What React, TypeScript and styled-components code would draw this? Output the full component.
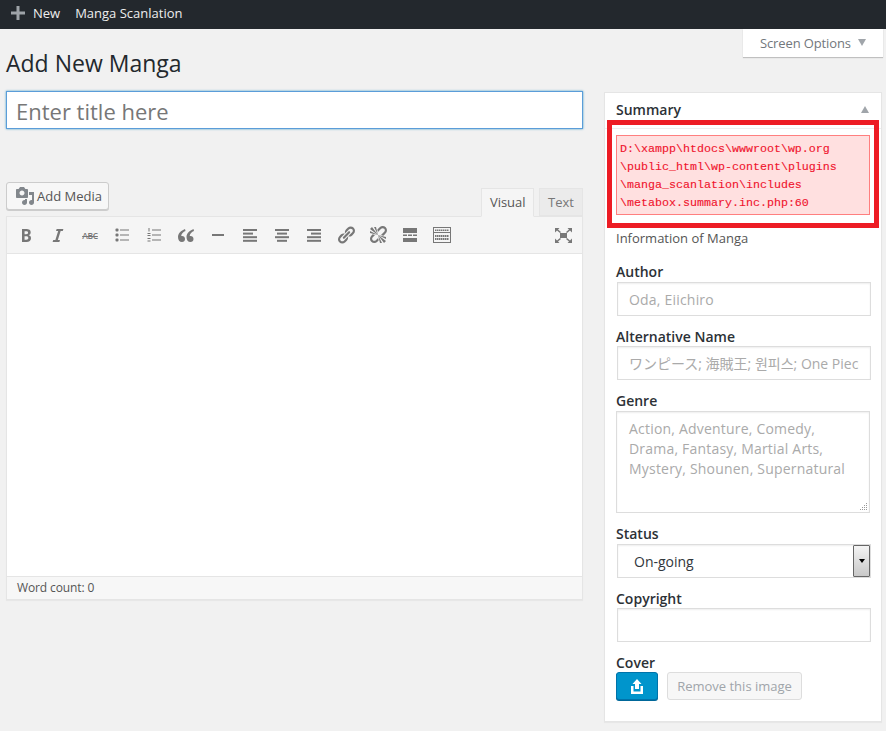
import React from 'react';
import styled, { createGlobalStyle } from 'styled-components';

const GlobalStyle = createGlobalStyle`
  html, body {
    margin: 0;
    padding: 0;
    background: #f1f1f1;
  }
  * {
    box-sizing: border-box;
  }
`;

const fontStack = `"Open Sans", "Noto Sans CJK JP", sans-serif`;

const Page = styled.div`
  width: 886px;
  height: 731px;
  overflow: hidden;
  background: #f1f1f1;
  font-family: ${fontStack};
  font-size: 14px;
  color: #23282d;
`;

const AdminBar = styled.div`
  height: 29px;
  background: #23282d;
  display: flex;
  align-items: center;
  padding: 0 0 3px 11px;
  color: #eee;
  font-size: 13px;
`;

const BarItem = styled.span`
  display: inline-flex;
  align-items: center;
  margin-right: 15px;
`;

const PlusIcon = styled.svg`
  width: 14px;
  height: 14px;
  margin-right: 8px;
  fill: #9ea3a8;
`;

const Header = styled.div`
  height: 62px;
  display: flex;
  justify-content: space-between;
  align-items: flex-start;
  padding: 0 3px 0 6px;
`;

const PageTitle = styled.h1`
  margin: 18px 0 0;
  font-size: 23px;
  line-height: 32px;
  font-weight: 400;
  color: #23282d;
`;

const ScreenOptions = styled.div`
  width: 140px;
  height: 28px;
  background: #fff;
  box-shadow: 0 1px 1px rgba(0, 0, 0, 0.2);
  display: flex;
  align-items: center;
  padding-left: 17px;
  font-size: 13px;
  letter-spacing: -0.12px;
  color: #72777c;
`;

const DownArrow = styled.span`
  width: 0;
  height: 0;
  margin-left: 7px;
  margin-top: -2px;
  border-left: 4px solid transparent;
  border-right: 4px solid transparent;
  border-top: 7px solid #a0a5aa;
`;

const Columns = styled.div`
  display: grid;
  grid-template-columns: 577px 278px;
  column-gap: 21px;
  padding-left: 6px;
  align-items: start;
`;

const MainColumn = styled.div`
  display: flex;
  flex-direction: column;
`;

const TitleInput = styled.input`
  height: 38px;
  width: 100%;
  border: 1px solid #5b9dd9;
  border-radius: 0;
  box-shadow: 0 0 2px rgba(30, 140, 190, 0.8);
  background: #fff;
  padding: 1px 9px 0;
  font-family: ${fontStack};
  font-size: 22px;
  outline: none;
  &::placeholder {
    color: #777;
    opacity: 1;
  }
`;

const EditorTools = styled.div`
  margin-top: 53px;
  height: 34px;
  display: flex;
  justify-content: space-between;
  align-items: flex-end;
`;

const AddMediaButton = styled.button`
  align-self: flex-start;
  height: 28px;
  width: 103px;
  display: flex;
  align-items: center;
  gap: 2px;
  padding: 0 0 0 8px;
  background: #f7f7f7;
  border: 1px solid #ccc;
  border-radius: 3px;
  box-shadow: 0 1px 0 #ccc;
  color: #555;
  font-family: ${fontStack};
  font-size: 13px;
`;

const MediaIcon = styled.svg`
  width: 20px;
  height: 20px;
  fill: #82878c;
  flex-shrink: 0;
`;

const Tabs = styled.div`
  display: flex;
  gap: 5px;
  align-items: flex-end;
`;

const Tab = styled.div<{ $active?: boolean }>`
  height: ${(p) => (p.$active ? 29 : 28)}px;
  margin-bottom: ${(p) => (p.$active ? -1 : 0)}px;
  padding: 0 ${(p) => (p.$active ? 7.5 : 8)}px ${(p) => (p.$active ? 2 : 0)}px;
  display: flex;
  align-items: center;
  font-size: 13px;
  border: 1px solid #e5e5e5;
  border-bottom: ${(p) => (p.$active ? '1px solid #f5f5f5' : '1px solid #e5e5e5')};
  background: ${(p) => (p.$active ? '#f5f5f5' : '#ebebeb')};
  color: ${(p) => (p.$active ? '#555' : '#777')};
  position: relative;
  z-index: 1;
`;

const EditorBox = styled.div`
  border: 1px solid #e5e5e5;
  box-shadow: 0 1px 1px rgba(0, 0, 0, 0.04);
  background: #fff;
`;

const Toolbar = styled.div`
  height: 37px;
  background: #f5f5f5;
  border-bottom: 1px solid #e5e5e5;
  display: flex;
  align-items: center;
  padding: 0 3px;
`;

const ToolButton = styled.span<{ $push?: boolean }>`
  width: 32px;
  height: 36px;
  display: flex;
  align-items: center;
  justify-content: center;
  margin-left: ${(p) => (p.$push ? 'auto' : 0)};
  svg {
    fill: #777;
  }
`;

const StrikeText = styled.span`
  font-size: 8.5px;
  font-weight: 600;
  letter-spacing: -0.3px;
  text-decoration: line-through;
  color: #777;
`;

const EditArea = styled.div`
  height: 322px;
  background: #fff;
`;

const StatusBar = styled.div`
  height: 23px;
  background: #f7f7f7;
  border-top: 1px solid #e5e5e5;
  padding: 0 0 2px 10px;
  display: flex;
  align-items: center;
  font-size: 12px;
  letter-spacing: -0.12px;
  color: #555;
`;

const SideBox = styled.div`
  position: relative;
  height: 630px;
  margin-top: 1px;
  background: #fff;
  border: 1px solid #e5e5e5;
  box-shadow: 0 1px 1px rgba(0, 0, 0, 0.04);
`;

const BoxHead = styled.div`
  height: 36px;
  border-bottom: 1px solid #eee;
  display: flex;
  justify-content: space-between;
  align-items: center;
  padding: 0 12px 2px 11px;
  font-weight: 600;
  font-size: 14px;
  color: #2c3136;
`;

const UpArrow = styled.span`
  width: 0;
  height: 0;
  border-left: 4px solid transparent;
  border-right: 4px solid transparent;
  border-bottom: 7px solid #a0a5aa;
`;

const BoxBody = styled.div`
  padding: 6px 11px 0;
`;

const ErrorBox = styled.div`
  width: 254px;
  height: 80px;
  padding: 4px 3px;
  border: 1px solid #ff7f7f;
  background: #ffe0e0;
  color: #f0142d;
  font-family: "Liberation Mono", monospace;
  font-size: 11.67px;
  line-height: 18px;
  white-space: pre;
  -webkit-text-stroke: 0.12px #f0142d;
`;

const Annotation = styled.div`
  position: absolute;
  left: 2px;
  top: 27px;
  width: 272px;
  height: 108px;
  border: 5px solid #ed1c24;
  pointer-events: none;
`;

const Hint = styled.div`
  margin-top: 14px;
  font-size: 13px;
  line-height: 18px;
  color: #555;
`;

const FieldLabel = styled.div<{ $top?: number }>`
  margin-top: ${(p) => p.$top ?? 13}px;
  height: 17px;
  line-height: 15px;
  font-size: 14px;
  font-weight: 600;
  color: #2c3136;
`;

const TextField = styled.input<{ $gap?: number; $spacing?: number }>`
  display: block;
  width: 254px;
  height: 34px;
  margin: ${(p) => p.$gap ?? 0}px 0 0 1px;
  padding: 0 11px;
  border: 1px solid #ddd;
  border-radius: 0;
  box-shadow: inset 0 1px 2px rgba(0, 0, 0, 0.07);
  background: #fff;
  font-family: ${fontStack};
  font-size: 14px;
  letter-spacing: ${(p) => p.$spacing ?? 0.2}px;
  outline: none;
  &::placeholder {
    color: #aaa;
    opacity: 1;
  }
`;

const TextBlockWrap = styled.div`
  position: relative;
  width: 254px;
  height: 102px;
  margin-top: 1px;
`;

const TextBlock = styled.textarea`
  display: block;
  width: 100%;
  height: 100%;
  padding: 7px 12px 0;
  border: 1px solid #ddd;
  border-radius: 0;
  box-shadow: inset 0 1px 2px rgba(0, 0, 0, 0.07);
  background: #fff;
  font-family: ${fontStack};
  font-size: 14px;
  letter-spacing: 0.2px;
  line-height: 20px;
  outline: none;
  resize: none;
  &::placeholder {
    color: #aaa;
    opacity: 1;
  }
`;

const Grip = styled.svg`
  position: absolute;
  right: 2px;
  bottom: 2px;
  width: 8px;
  height: 8px;
  fill: #999;
`;

const SelectField = styled.div`
  width: 254px;
  height: 34px;
  margin: 1px 0 0 1px;
  padding-left: 16px;
  border: 1px solid #ddd;
  box-shadow: inset 0 1px 2px rgba(0, 0, 0, 0.07);
  background: #fff;
  display: flex;
  justify-content: space-between;
  align-items: center;
  color: #32373c;
`;

const SelectArrow = styled.span`
  width: 17px;
  height: 32px;
  border: 1px solid #666;
  border-radius: 1px;
  background: linear-gradient(#f4f4f4, #c8c8c8);
  display: flex;
  align-items: center;
  justify-content: center;
  &::after {
    content: '';
    border-left: 3.5px solid transparent;
    border-right: 3.5px solid transparent;
    border-top: 4px solid #000;
  }
`;

const ImageActions = styled.div`
  display: flex;
  gap: 9px;
`;

const UploadButton = styled.button`
  width: 42px;
  height: 28px;
  padding: 0;
  display: flex;
  align-items: center;
  justify-content: center;
  background: #0095cc;
  border: 1px solid #0073aa;
  border-radius: 3px;
  box-shadow: 0 1px 0 #006799;
  svg {
    fill: #fff;
  }
`;

const RemoveButton = styled.button`
  width: 135px;
  height: 28px;
  padding: 0;
  background: #f7f7f7;
  border: 1px solid #ddd;
  border-radius: 3px;
  font-family: ${fontStack};
  font-size: 13px;
  color: #a0a5aa;
`;

const Dash = ({ d, size = 20 }: { d: string; size?: number }) => (
  <svg width={size} height={size} viewBox="0 0 20 20">
    <path d={d} />
  </svg>
);

const AlignIcon = ({ rows }: { rows: [number, number][] }) => (
  <svg width="16" height="14" viewBox="0 0 16 14">
    {rows.map(([x, w], i) => (
      <rect key={i} x={x} y={1 + i * 3.6} width={w} height="2" />
    ))}
  </svg>
);

const BulletList = () => (
  <svg width="15" height="14" viewBox="0 0 15 14">
    {[2, 7, 12].map((y) => (
      <React.Fragment key={y}>
        <rect x="0.5" y={y - 1.5} width="3" height="3" rx="1" />
        <rect x="5" y={y - 0.5} width="9" height="1" />
      </React.Fragment>
    ))}
  </svg>
);

const NumberList = () => (
  <svg width="15" height="14" viewBox="0 0 15 14">
    <rect x="1.5" y="0" width="1" height="3.5" />
    <rect x="0.5" y="5" width="3" height="1" />
    <rect x="0.5" y="7" width="3" height="1" />
    <rect x="0.5" y="10" width="3" height="1" />
    <rect x="0.5" y="12.5" width="3" height="1" />
    {[2, 7, 12].map((y) => (
      <rect key={y} x="5" y={y - 0.5} width="9" height="1" />
    ))}
  </svg>
);

const QuoteMarks = () => (
  <svg width="16" height="13" viewBox="0 0 16 13">
    <path d="M7 0C3 1.500 0 4.500 0 8c0 3 1.500 5 4 5 1.800 0 3-1.300 3-3 0-1.800-1.200-3-3-3-.4 0-.6 0-.8.1C3.500 4.500 5.200 3 7.500 2zM15.500 0C11.500 1.500 8.500 4.500 8.500 8c0 3 1.500 5 4 5 1.800 0 3-1.300 3-3 0-1.800-1.200-3-3-3-.4 0-.6 0-.8.1.3-2.600 2-4.100 4.300-5.100z" />
  </svg>
);

const ReadMore = () => (
  <svg width="16" height="14" viewBox="0 0 16 14">
    <rect x="1" y="0" width="14" height="5" />
    <rect x="1" y="6.500" width="4" height="1.500" />
    <rect x="6" y="6.500" width="4" height="1.500" />
    <rect x="11" y="6.500" width="4" height="1.500" />
    <rect x="1" y="10" width="14" height="4" />
  </svg>
);

const Keyboard = () => (
  <svg width="18" height="16" viewBox="0 0 18 16">
    <path d="M0 0h18v16H0zM1 1v4h16V1zM1 6v9h16V6z" fillRule="evenodd" />
    {[2, 4, 6, 8, 10, 12, 14].map((x) => (
      <React.Fragment key={x}>
        <rect x={x} y="2.500" width="1.500" height="1.500" />
        <rect x={x} y="8" width="1.500" height="2" />
        <rect x={x} y="11" width="1.500" height="2" />
      </React.Fragment>
    ))}
  </svg>
);

const Fullscreen = () => (
  <svg width="17" height="15" viewBox="0 0 17 15">
    <path d="M0 0h4.500L3 1.500 6 4 5 5 2 2.500 0 4.500zM17 0h-4.500L14 1.500 11 4l1 1 3-2.500 2 2zM0 15h4.500L3 13.500 6 11l-1-1-3 2.500-2-2zM17 15h-4.500l1.500-1.500-3-2.500 1-1 3 2.500 2-2z" />
    <rect x="5" y="5" width="7" height="5" />
  </svg>
);

const boldPath =
  'M6 4v13h4.540c1.370 0 2.460-.33 3.260-1 .8-.66 1.200-1.580 1.200-2.770 0-.84-.17-1.510-.51-2.010s-.9-.85-1.670-1.030v-.09c.57-.1 1.020-.4 1.360-.9s.51-1.130.51-1.910c0-1.140-.39-1.980-1.170-2.500C12.750 4.260 11.500 4 9.780 4H6zm2.570 5.150V6.260h1.360c.73 0 1.270.11 1.610.32.34.22.51.58.51 1.070 0 .54-.16.92-.47 1.150s-.82.35-1.510.35h-1.500zm0 2.190h1.600c1.440 0 2.160.53 2.160 1.610 0 .6-.17 1.050-.51 1.340s-.86.45-1.570.45h-1.680v-3.400z';
const italicPath = 'M14.780 6h-2.130l-2.800 9h2.120l-.62 2H4.600l.62-2h2.140l2.800-9H8.030l.62-2h6.750z';
const linkPath =
  'M17.740 2.760c1.680 1.690 1.680 4.410 0 6.100l-1.530 1.520c-1.120 1.120-2.700 1.470-4.140 1.090l2.620-2.610.76-.77.76-.76c.84-.84.84-2.200 0-3.040-.84-.85-2.200-.85-3.040 0l-.77.76-3.380 3.380c-.37-1.440-.02-3.020 1.100-4.140l1.520-1.530c1.690-1.680 4.420-1.680 6.100 0zM8.590 13.430l5.340-5.340c.42-.42.42-1.100 0-1.520-.44-.43-1.130-.39-1.530 0l-5.330 5.340c-.42.42-.42 1.100 0 1.520.44.43 1.130.39 1.520 0zm-.76 2.290l4.140-4.150c.38 1.440.03 3.020-1.090 4.140l-1.520 1.530c-1.690 1.680-4.410 1.680-6.100 0-1.680-1.680-1.680-4.420 0-6.100l1.530-1.520c1.120-1.120 2.700-1.470 4.140-1.100l-4.140 4.150c-.85.84-.85 2.200 0 3.050.84.84 2.200.84 3.040 0z';
const unlinkPath =
  'M17.740 2.260c1.680 1.690 1.680 4.410 0 6.100l-1.530 1.520c-.32.33-.69.58-1.080.77L13 10l1.690-1.640.76-.77.76-.76c.84-.84.84-2.200 0-3.040-.84-.85-2.200-.85-3.040 0l-.77.76-.76.76L10 7l-.65-2.140c.19-.38.44-.75.77-1.070l1.520-1.530c1.690-1.680 4.420-1.680 6.100 0zM2 4l8 6-6-8zm4-2l4 8-2-8H6zM2 6l8 4-8-2V6zm7.360 7.690L10 13l.74 2.350-1.380 1.390c-1.690 1.680-4.410 1.680-6.100 0-1.680-1.680-1.680-4.420 0-6.100l1.390-1.380L7 10l-.69.64-1.520 1.530c-.85.84-.85 2.200 0 3.040.84.85 2.200.85 3.040 0zM18 16l-8-6 6 8zm-4 2l-4-8 2 8h2zm4-4l-8-4 8 2v2z';
const mediaPath =
  'M13 11V4c0-.55-.45-1-1-1h-1.670L9 1H5L3.670 3H2c-.55 0-1 .45-1 1v7c0 .55.45 1 1 1h10c.55 0 1-.45 1-1zM7 4.500c1.380 0 2.500 1.120 2.500 2.500S8.380 9.500 7 9.500 4.500 8.380 4.500 7 5.620 4.500 7 4.500zM14 6h5v10.500c0 1.380-1.120 2.500-2.500 2.500S14 17.880 14 16.500s1.120-2.500 2.500-2.500c.17 0 .34.02.5.05V9h-3V6zm-4 8.050V13h2v3.500c0 1.380-1.120 2.500-2.500 2.500S7 17.880 7 16.500 8.120 14 9.500 14c.17 0 .34.02.5.05z';

const tools = [
  <Dash d={boldPath} key="bold" />,
  <Dash d={italicPath} key="italic" />,
  <StrikeText key="strike">ABC</StrikeText>,
  <BulletList key="ul" />,
  <NumberList key="ol" />,
  <QuoteMarks key="quote" />,
  <svg key="hr" width="16" height="14" viewBox="0 0 16 14">
    <rect x="2" y="6" width="12" height="2" />
  </svg>,
  <AlignIcon key="left" rows={[[1, 14], [1, 10], [1, 14], [1, 14]]} />,
  <AlignIcon key="center" rows={[[1, 14], [3, 10], [1, 14], [3, 10]]} />,
  <AlignIcon key="right" rows={[[1, 14], [5, 10], [1, 14], [1, 14]]} />,
  <Dash d={linkPath} key="link" />,
  <Dash d={unlinkPath} key="unlink" />,
  <ReadMore key="more" />,
  <Keyboard key="kitchen" />,
];

export default function App() {
  return (
    <Page>
      <GlobalStyle />
      <AdminBar>
        <BarItem>
          <PlusIcon viewBox="0 0 14 14">
            <path d="M5.500 0h3v5.500H14v3H8.500V14h-3V8.500H0v-3h5.500z" />
          </PlusIcon>
          New
        </BarItem>
        <BarItem>Manga Scanlation</BarItem>
      </AdminBar>
      <Header>
        <PageTitle>Add New Manga</PageTitle>
        <ScreenOptions>
          Screen Options
          <DownArrow />
        </ScreenOptions>
      </Header>
      <Columns>
        <MainColumn>
          <TitleInput placeholder="Enter title here" />
          <EditorTools>
            <AddMediaButton>
              <MediaIcon viewBox="0 0 20 20">
                <path d={mediaPath} />
              </MediaIcon>
              Add Media
            </AddMediaButton>
            <Tabs>
              <Tab $active>Visual</Tab>
              <Tab>Text</Tab>
            </Tabs>
          </EditorTools>
          <EditorBox>
            <Toolbar>
              {tools.map((tool, i) => (
                <ToolButton key={i}>{tool}</ToolButton>
              ))}
              <ToolButton $push>
                <Fullscreen />
              </ToolButton>
            </Toolbar>
            <EditArea />
            <StatusBar>Word count: 0</StatusBar>
          </EditorBox>
        </MainColumn>
        <SideBox>
          <BoxHead>
            Summary
            <UpArrow />
          </BoxHead>
          <BoxBody>
            <ErrorBox>
              {'D:\\xampp\\htdocs\\wwwroot\\wp.org\n\\public_html\\wp-content\\plugins\n\\manga_scanlation\\includes\n\\metabox.summary.inc.php:60'}
            </ErrorBox>
            <Hint>Information of Manga</Hint>
            <FieldLabel $top={17}>Author</FieldLabel>
            <TextField $gap={1} placeholder="Oda, Eiichiro" />
            <FieldLabel>Alternative Name</FieldLabel>
            <TextField $spacing={0} placeholder="ワンピース; 海賊王; 원피스; One Piece" />
            <FieldLabel>Genre</FieldLabel>
            <TextBlockWrap>
              <TextBlock placeholder="Action, Adventure, Comedy, Drama, Fantasy, Martial Arts, Mystery, Shounen, Supernatural" />
              <Grip viewBox="0 0 8 8">
                <rect x="6" y="0" width="1" height="1" />
                <rect x="4" y="2" width="1" height="1" />
                <rect x="6" y="2" width="1" height="1" />
                <rect x="2" y="4" width="1" height="1" />
                <rect x="4" y="4" width="1" height="1" />
                <rect x="6" y="4" width="1" height="1" />
                <rect x="0" y="6" width="1" height="1" />
                <rect x="2" y="6" width="1" height="1" />
                <rect x="4" y="6" width="1" height="1" />
                <rect x="6" y="6" width="1" height="1" />
              </Grip>
            </TextBlockWrap>
            <FieldLabel>Status</FieldLabel>
            <SelectField>
              On-going
              <SelectArrow />
            </SelectField>
            <FieldLabel>Copyright</FieldLabel>
            <TextField />
            <FieldLabel>Cover</FieldLabel>
            <ImageActions>
              <UploadButton>
                <svg width="14" height="15" viewBox="0 0 14 15">
                  <path d="M7 0l4.500 5H9v5H5V5H2.500zM1 7h2.500v5.500h7V7H13v8H1z" />
                </svg>
              </UploadButton>
              <RemoveButton>Remove this image</RemoveButton>
            </ImageActions>
          </BoxBody>
          <Annotation />
        </SideBox>
      </Columns>
    </Page>
  );
}
